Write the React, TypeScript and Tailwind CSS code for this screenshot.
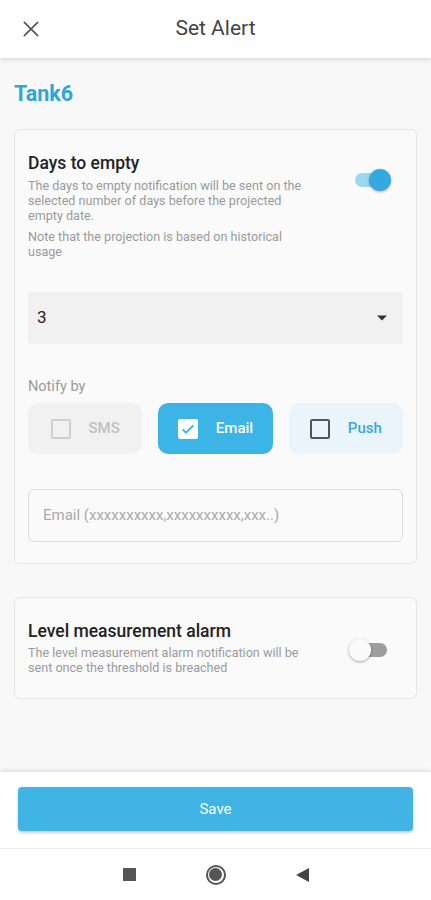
import React from "react";

function Toggle({ on }: { on: boolean }) {
  if (on) {
    return (
      <div className="relative w-[40px] h-[24px] flex items-center">
        <div className="ml-[2px] w-[32px] h-[14px] rounded-full bg-[#9fd6f0]" />
        <div className="absolute right-[2px] top-[1px] w-[22px] h-[22px] rounded-full bg-[#34a9e0] shadow-[0_1px_3px_rgba(0,0,0,0.3)]" />
      </div>
    );
  }
  return (
    <div className="relative w-[40px] h-[24px] flex items-center">
      <div className="ml-[6px] w-[32px] h-[14px] rounded-full bg-[#9e9e9e]" />
      <div className="absolute left-[0px] top-[1px] w-[22px] h-[22px] rounded-full bg-[#fafafa] shadow-[0_1px_3px_rgba(0,0,0,0.35)]" />
    </div>
  );
}

function Check({ variant }: { variant: "sms" | "email" | "push" }) {
  if (variant === "email") {
    return (
      <div className="w-[20px] h-[20px] bg-white rounded-[2px] flex items-center justify-center">
        <svg width="16" height="16" viewBox="0 0 24 24">
          <path d="M4 12.5l5 5L20 6.5" fill="none" stroke="#3db4e6" strokeWidth="3" />
        </svg>
      </div>
    );
  }
  const border = variant === "sms" ? "border-[#cfcfcf]" : "border-[#555]";
  return <div className={`w-[20px] h-[20px] rounded-[2px] border-2 ${border}`} />;
}

export default function App() {
  return (
    <div
      className="w-[431px] h-[900px] flex flex-col bg-[#f8f8f8] overflow-hidden"
      style={{ fontFamily: "Roboto, 'Noto Sans', sans-serif" }}
    >
      {/* Header */}
      <div className="relative z-10 h-[58px] shrink-0 bg-white flex items-center shadow-[0_2px_4px_rgba(0,0,0,0.12)]">
        <div className="w-[62px] flex items-center justify-center">
          <svg width="20" height="20" viewBox="0 0 24 24">
            <path d="M4 4L20 20M20 4L4 20" stroke="#555" strokeWidth="2" strokeLinecap="round" />
          </svg>
        </div>
        <div className="flex-1 text-center text-[21px] text-[#444] mr-[62px]">Set Alert</div>
      </div>

      {/* Content */}
      <div className="flex-1 px-[14px] pt-[22px]">
        <div className="text-[21.5px] font-bold text-[#2ea6d6] leading-[28px]">Tank6</div>

        <div className="mt-[21px] border border-[#e6e6e6] rounded-[6px] bg-[#fafafa] px-[13px] pt-[22px] pb-[21px]">
          <div className="flex justify-between">
            <div className="w-[288px]">
              <div className="text-[17.5px] font-medium text-[#222] leading-[22px]">Days to empty</div>
              <div className="mt-[4px] text-[12.6px] leading-[15px] text-[#9a9a9a]">
                The days to empty notification will be sent on the selected number of days before the projected empty date.
              </div>
              <div className="mt-[6px] text-[12.6px] leading-[15px] text-[#9a9a9a]">
                Note that the projection is based on historical usage
              </div>
            </div>
            <div className="mt-[16px] mr-[10px]">
              <Toggle on />
            </div>
          </div>

          <div className="mt-[33px] h-[52px] bg-[#f1f1f1] rounded-[3px] flex items-center justify-between pl-[9px] pr-[16px]">
            <span className="text-[17px] text-[#222]">3</span>
            <svg width="10" height="6" viewBox="0 0 10 5">
              <path d="M0 0h10L5 5z" fill="#333" />
            </svg>
          </div>

          <div className="mt-[34px] text-[14.5px] text-[#9a9a9a] leading-[18px]">Notify by</div>

          <div className="mt-[7px] grid grid-cols-3 gap-[16px]">
            <div className="h-[51px] rounded-[10px] bg-[#f1f1f1] flex items-center justify-center gap-[18px]">
              <Check variant="sms" />
              <span className="text-[15px] text-[#c0c0c0] font-medium">SMS</span>
            </div>
            <div className="h-[51px] rounded-[10px] bg-[#3db4e6] flex items-center justify-center gap-[18px]">
              <Check variant="email" />
              <span className="text-[15px] text-white font-medium">Email</span>
            </div>
            <div className="h-[51px] rounded-[10px] bg-[#eaf4fb] flex items-center justify-center gap-[18px]">
              <Check variant="push" />
              <span className="text-[15px] text-[#3aa8d8] font-medium">Push</span>
            </div>
          </div>

          <div className="mt-[35px] h-[53px] border border-[#dcdcdc] rounded-[6px] flex items-center px-[14px]">
            <span className="text-[15px] text-[#aaa]">Email (xxxxxxxxxx,xxxxxxxxxx,xxx..)</span>
          </div>
        </div>

        <div className="mt-[33px] border border-[#e6e6e6] rounded-[6px] bg-[#fafafa] px-[13px] pt-[22px] pb-[23px] flex justify-between">
          <div className="w-[288px]">
            <div className="text-[17.5px] font-medium text-[#222] leading-[22px]">Level measurement alarm</div>
            <div className="mt-[3px] text-[12.6px] leading-[15px] text-[#9a9a9a]">
              The level measurement alarm notification will be sent once the threshold is breached
            </div>
          </div>
          <div className="mt-[18px] mr-[14px]">
            <Toggle on={false} />
          </div>
        </div>
      </div>

      {/* Bottom save */}
      <div className="relative h-[76px] shrink-0 bg-white shadow-[0_-2px_4px_rgba(0,0,0,0.1)] px-[18px] pt-[15px]">
        <div className="h-[44px] rounded-[4px] bg-[#40b4e5] shadow-[0_2px_3px_rgba(0,0,0,0.2)] flex items-center justify-center text-[15px] text-white">
          Save
        </div>
      </div>

      {/* Nav bar */}
      <div className="h-[52px] shrink-0 bg-white border-t border-[#eeeeee] flex items-center justify-center gap-[70px]">
        <div className="w-[13px] h-[13px] bg-[#555]" />
        <div className="w-[20px] h-[20px] rounded-full border-2 border-[#555] flex items-center justify-center">
          <div className="w-[13px] h-[13px] rounded-full bg-[#555]" />
        </div>
        <svg width="13" height="14" viewBox="0 0 13 14">
          <path d="M13 0v14L0 7z" fill="#444" />
        </svg>
      </div>
    </div>
  );
}
